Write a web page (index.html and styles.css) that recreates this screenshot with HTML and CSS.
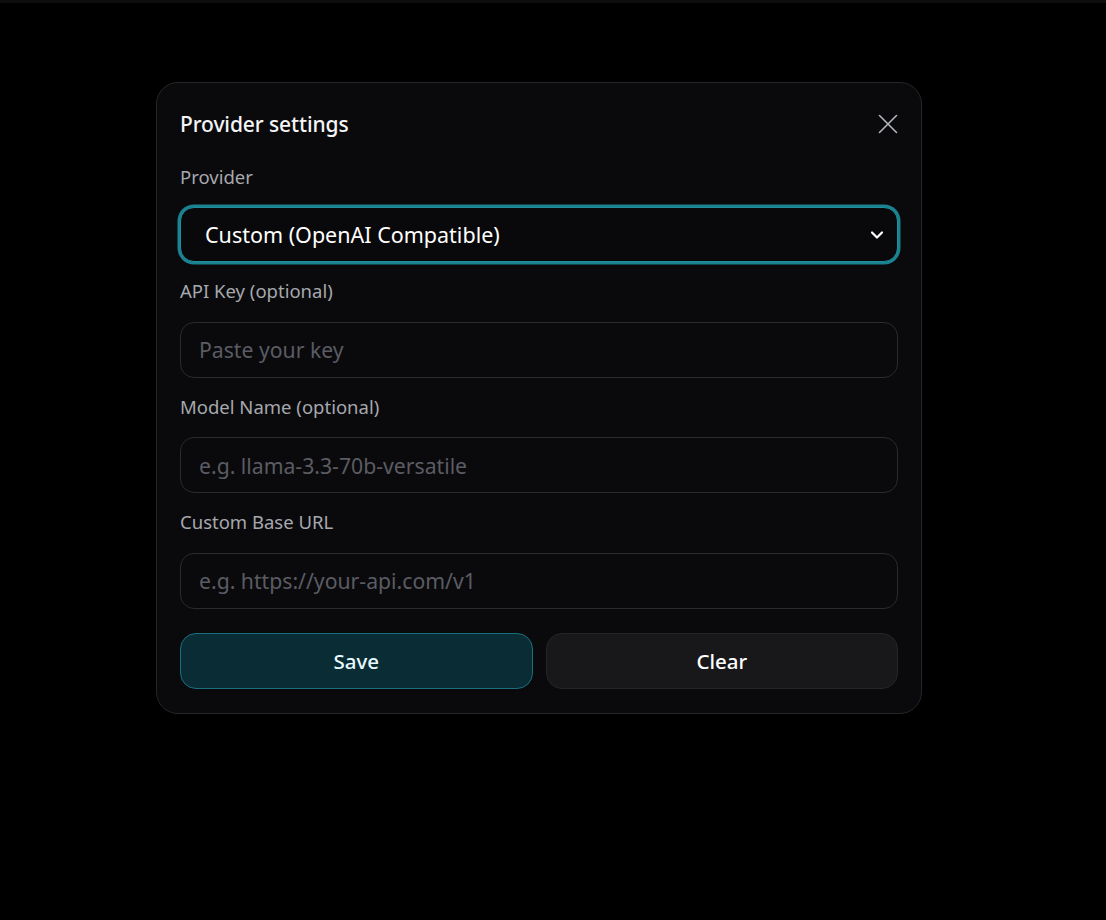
FILE: index.html
```html
<!DOCTYPE html>
<html lang="en">
<head>
<meta charset="utf-8">
<title>Provider settings</title>
<link rel="stylesheet" href="styles.css">
</head>
<body>
<div class="topbar"></div>
<main class="stage">
  <section class="card">
    <header class="card-head">
      <h2 class="title">Provider settings</h2>
      <button class="close" aria-label="Close">
        <svg width="20" height="20" viewBox="0 0 20 20" fill="none" stroke="#b4b6bd" stroke-width="1.6" stroke-linecap="round"><path d="M1.5 1.5 L18.5 18.5 M18.5 1.5 L1.5 18.5"/></svg>
      </button>
    </header>
    <div class="field field-first">
      <label class="label">Provider</label>
      <div class="select">
        <span class="select-text">Custom (OpenAI Compatible)</span>
        <svg class="chev" width="14" height="10" viewBox="0 0 14 10" fill="none" stroke="#ffffff" stroke-width="2.2" stroke-linecap="round" stroke-linejoin="round"><path d="M2 2.5 L7 7.5 L12 2.5"/></svg>
      </div>
    </div>
    <div class="field">
      <label class="label">API Key (optional)</label>
      <input class="input" type="text" placeholder="Paste your key">
    </div>
    <div class="field">
      <label class="label">Model Name (optional)</label>
      <input class="input" type="text" placeholder="e.g. llama-3.3-70b-versatile">
    </div>
    <div class="field">
      <label class="label">Custom Base URL</label>
      <input class="input" type="text" placeholder="e.g. https://your-api.com/v1">
    </div>
    <div class="actions">
      <button class="btn btn-save">Save</button>
      <button class="btn btn-clear">Clear</button>
    </div>
  </section>
</main>
</body>
</html>
```
FILE: styles.css
```css
* { box-sizing: border-box; }
html, body {
  margin: 0;
  padding: 0;
  background: #000000;
  font-family: "Noto Sans", "Open Sans", sans-serif;
  color: #ffffff;
}
.topbar {
  height: 3px;
  background: #0e0e10;
}
.stage {
  padding-top: 79px;
  padding-left: 156px;
}
.card {
  width: 766px;
  background: #0a0a0c;
  border: 1px solid #26262a;
  border-radius: 22px;
  padding: 23px 23px 24px 23px;
}
.card-head {
  display: flex;
  align-items: center;
  justify-content: space-between;
  height: 36px;
}
.title {
  margin: 0;
  font-size: 21px;
  font-weight: 500;
  color: #f4f5f7;
  letter-spacing: -0.1px;
}
.close {
  background: none;
  border: none;
  padding: 0;
  width: 36px;
  height: 36px;
  display: flex;
  align-items: center;
  justify-content: flex-end;
}
.field {
  display: flex;
  flex-direction: column;
}
.label {
  display: block;
  font-size: 18.5px;
  line-height: 24px;
  color: #a6a8ae;
  margin-top: 17px;
  margin-bottom: 18.5px;
}
.field-first .label { margin-top: 23px; margin-bottom: 18px; }
.select {
  height: 55px;
  border: 1px solid #1f8f9c;
  box-shadow: 0 0 0 2.5px #1a8290;
  border-radius: 14px;
  display: flex;
  align-items: center;
  justify-content: space-between;
  padding: 0 13px 0 24px;
  background: #09090b;
}
.select-text {
  font-size: 21.5px;
  color: #ffffff;
}
.input {
  height: 56px;
  width: 100%;
  border: 1px solid #2a2a2f;
  border-radius: 14px;
  background: #0a0a0c;
  padding: 0 18px;
  font-family: "Noto Sans", "Open Sans", sans-serif;
  font-size: 21.2px;
  color: #ffffff;
  outline: none;
}
.input::placeholder { color: #5b5c63; }
.actions {
  display: grid;
  grid-template-columns: 1fr 1fr;
  gap: 13px;
  margin-top: 24.5px;
}
.btn {
  height: 56px;
  border-radius: 16px;
  font-family: "Noto Sans", "Open Sans", sans-serif;
  font-size: 20.5px;
  font-weight: 500;
  color: #ffffff;
  cursor: pointer;
}
.btn-save {
  background: #0a2c35;
  border: 1px solid #1a6f7e;
  color: #e8fbff;
}
.btn-clear {
  background: #18181b;
  border: 1px solid #26262a;
}
```
